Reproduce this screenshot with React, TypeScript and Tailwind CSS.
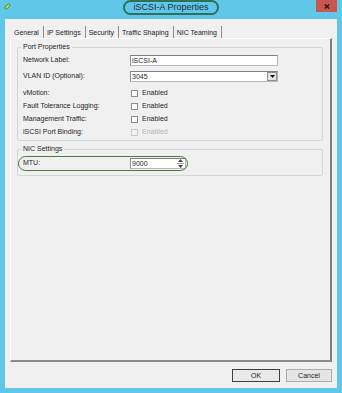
import React from "react";

const tabs = ["General", "IP Settings", "Security", "Traffic Shaping", "NIC Teaming"];

const checks = [
  { label: "vMotion:", disabled: false },
  { label: "Fault Tolerance Logging:", disabled: false },
  { label: "Management Traffic:", disabled: false },
  { label: "iSCSI Port Binding:", disabled: true },
];

function TextBox({ value, width }: { value: string; width: string }) {
  return (
    <div
      className={`${width} h-[11px] bg-white border border-[#b4b7bd] border-t-[#7c7f85] border-l-[#8d9096] flex items-center pl-[1px] leading-none`}
    >
      {value}
    </div>
  );
}

function CheckBox({ disabled }: { disabled: boolean }) {
  return (
    <div
      className={`w-[7px] h-[7px] border ${
        disabled ? "border-[#c9c9c9] bg-[#f3f3f3]" : "border-[#8a8c8f] bg-white"
      }`}
    />
  );
}

function AppIcon() {
  return (
    <svg width="9" height="9" viewBox="0 0 9 9">
      <rect x="0.8" y="2.6" width="7.4" height="3.8" rx="1.9" transform="rotate(-45 4.5 4.5)" fill="#5f9e2c" />
      <rect x="2.2" y="3.8" width="4.6" height="1.4" rx="0.7" transform="rotate(-45 4.5 4.5)" fill="#c9e6a4" />
    </svg>
  );
}

export default function App() {
  return (
    <div className="w-[342px] h-[393px] bg-[#60c7eb] flex flex-col overflow-hidden font-['Liberation_Sans',Arial,sans-serif] text-[7px] text-[#1d1d1d]">
      {/* title bar */}
      <div className="h-[19px] shrink-0 grid grid-cols-[1fr_auto_1fr] items-start">
        <div className="pl-[3px] pt-[2px]">
          <AppIcon />
        </div>
        <div className="h-[15px] rounded-full border-2 border-[#2f7058] px-[8px] flex items-center text-[9px] text-[#1b2c36] leading-none">
          iSCSI-A Properties
        </div>
        <div className="flex justify-end pr-[5px]">
          <div className="w-[21px] h-[12px] bg-[#c9554d] flex items-center justify-center">
            <svg width="6" height="5" viewBox="0 0 6 5">
              <path d="M0.8 0.5 L5.2 4.5 M5.2 0.5 L0.8 4.5" stroke="#2a1512" strokeWidth="1.4" />
            </svg>
          </div>
        </div>
      </div>

      {/* client area */}
      <div className="flex-1 mx-[5px] mb-[5px] bg-[#f0f0f0] flex flex-col px-[5px] pt-[7px]">
        {/* tab strip */}
        <div className="h-[12px] flex items-stretch pl-[4px]">
          {tabs.map((t, i) => (
            <div
              key={t}
              className={`flex items-center border-r border-[#8c8c8c] pr-[4px] leading-none ${
                i === 0 ? "pl-0" : "pl-[3px]"
              }`}
            >
              {t}
            </div>
          ))}
        </div>

        {/* tab page */}
        <div className="h-[324px] border-l border-t border-[#fdfdfd] border-r-2 border-b-2 border-r-[#7d7d7d] border-b-[#8a8a8a] pl-[6px] pr-[7px] pt-[4px]">
          <fieldset className="border border-[#d3d6d8] rounded-[2px] pl-[5px] pb-[1px]">
            <legend className="px-[2px] -ml-[2px] h-[8px] leading-[8px]">Port Properties</legend>
            <div className="mt-[4px] h-[11px] flex items-center">
              <div className="w-[107px] shrink-0">Network Label:</div>
              <TextBox value="iSCSI-A" width="w-[148px]" />
            </div>
            <div className="mt-[5px] h-[11px] flex items-center">
              <div className="w-[107px] shrink-0">VLAN ID (Optional):</div>
              <div className="w-[148px] h-[11px] bg-white border border-[#b4b7bd] border-t-[#7c7f85] border-l-[#8d9096] flex items-center justify-between pl-[1px] leading-none">
                <span>3045</span>
                <div className="w-[10px] h-[9px] border border-[#8f8f8f] bg-[#e6e6e6] flex items-center justify-center">
                  <svg width="5" height="3" viewBox="0 0 5 3">
                    <path d="M0 0 L5 0 L2.5 3 Z" fill="#111" />
                  </svg>
                </div>
              </div>
            </div>
            <div className="mt-[5px]">
              {checks.map((c) => (
                <div key={c.label} className="h-[13px] flex items-center">
                  <div className="w-[108px] shrink-0">{c.label}</div>
                  <CheckBox disabled={c.disabled} />
                  <span className={`ml-[4px] ${c.disabled ? "text-[#b3b3b3]" : ""}`}>Enabled</span>
                </div>
              ))}
            </div>
          </fieldset>

          <fieldset className="mt-[4px] border border-[#d3d6d8] rounded-[2px] pl-[5px] pb-[6px]">
            <legend className="px-[2px] -ml-[2px] h-[8px] leading-[8px]">NIC Settings</legend>
            <div className="relative mt-[5px] h-[11px] flex items-center">
              <div className="w-[107px] shrink-0">MTU:</div>
              <div className="w-[56px] h-[11px] bg-white border border-[#b4b7bd] border-t-[#7c7f85] border-l-[#8d9096] flex items-center justify-between pl-[1px] leading-none">
                <span>9000</span>
                <div className="w-[8px] h-[9px] flex flex-col items-center justify-center gap-[1px] mr-[1px]">
                  <svg width="5" height="3" viewBox="0 0 5 3">
                    <path d="M0 3 L5 3 L2.5 0 Z" fill="#444" />
                  </svg>
                  <div className="w-[7px] h-px bg-[#9a9a9a]" />
                  <svg width="5" height="3" viewBox="0 0 5 3">
                    <path d="M0 0 L5 0 L2.5 3 Z" fill="#444" />
                  </svg>
                </div>
              </div>
              {/* highlight annotation */}
              <div className="absolute -left-[5px] -top-[2px] -bottom-[2px] w-[170px] rounded-full border-[1.5px] border-[#4a7b3e] pointer-events-none" />
            </div>
          </fieldset>
        </div>

        {/* buttons */}
        <div className="mt-[7px] flex justify-end gap-[6px]">
          <div className="w-[48px] h-[13px] border border-[#3f3f3f] bg-[#e9e9e9] flex items-center justify-center leading-none">
            OK
          </div>
          <div className="w-[46px] h-[13px] border border-[#acacac] bg-[#e5e5e5] flex items-center justify-center leading-none">
            Cancel
          </div>
        </div>
      </div>
    </div>
  );
}
